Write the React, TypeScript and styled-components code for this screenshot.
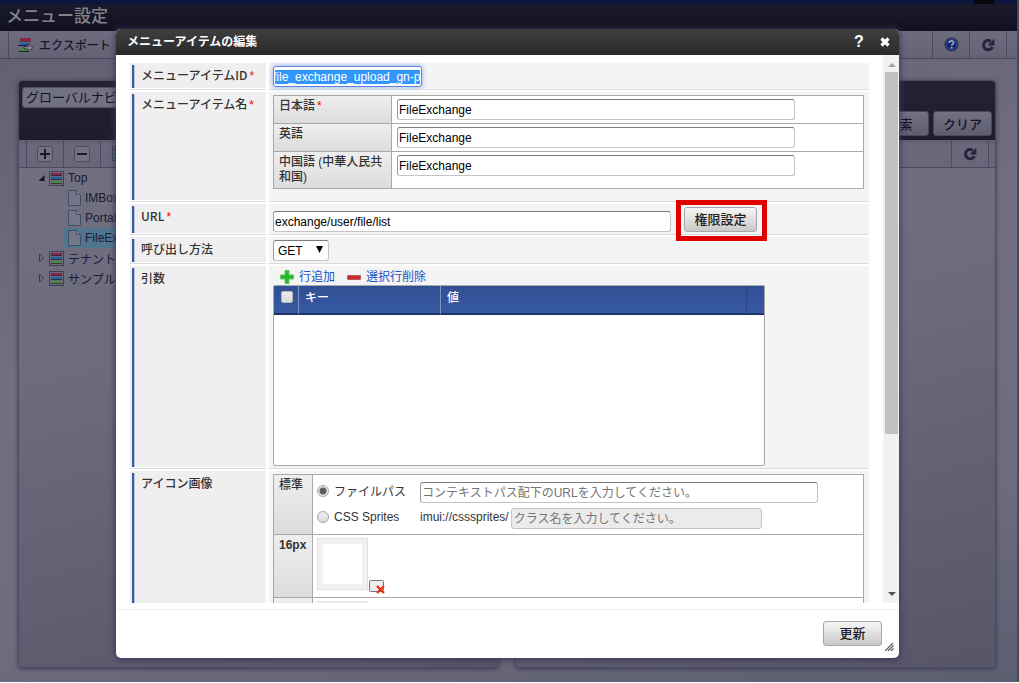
import React, { useEffect, useRef } from "react";
import styled, { createGlobalStyle, css } from "styled-components";

const GlobalStyle = createGlobalStyle`
  * { box-sizing: border-box; }
  html, body { margin: 0; padding: 0; background: #fff; }
  body, button, input, select {
    font-family: "Liberation Sans", "Noto Sans CJK JP", sans-serif;
    font-size: 12px;
    color: #333;
  }
  body { overflow: hidden; }
`;

/* ---------- Page behind the dialog ---------- */

const Page = styled.div`
  position: relative;
  display: flex;
  flex-direction: column;
  height: calc(100vh - 1px);
  border-right: 2px solid #4a4a4c;
  background: linear-gradient(170deg, #5f5e70 0%, #716f81 45%, #6e6d7f 75%, #5d5e70 100%);
`;

const TopStrip = styled.div`
  display: flex;
  justify-content: flex-end;
  height: 4px;
  padding-right: 22px;
  background: #0c163f;
`;

const TopBump = styled.span`
  width: 22px;
  height: 4px;
  border-radius: 0 0 11px 11px;
  background: #06070f;
`;

const PageTitle = styled.h1`
  margin: 0;
  height: 27px;
  padding-left: 6px;
  font-size: 17px;
  font-weight: 500;
  line-height: 25px;
  color: #83838c;
  background: linear-gradient(#1b1a2b, #121123);
`;

const PageToolbar = styled.div`
  display: flex;
  justify-content: space-between;
  height: 28px;
  padding: 0 10px 0 8px;
  border-bottom: 1px solid #47465a;
  background: linear-gradient(#6e6d80, #646376);
`;

const ToolGroup = styled.div`
  display: flex;
`;

const ToolButton = styled.button<{ $wide?: boolean }>`
  display: flex;
  align-items: center;
  justify-content: ${(p) => (p.$wide ? "flex-start" : "center")};
  gap: 5px;
  width: ${(p) => (p.$wide ? "120px" : "37px")};
  padding: 0 ${(p) => (p.$wide ? "9px" : "0")};
  border: 0;
  border-left: 1px solid #4b4a5e;
  background: none;
  color: #16152a;
  font-weight: 500;
  white-space: nowrap;
`;

const ToolEnd = styled.span`
  width: 1px;
  background: #4b4a5e;
`;

const Panels = styled.main`
  display: grid;
  grid-template-columns: 1fr 1fr;
  gap: 16px;
  flex: 1;
  min-height: 0;
  padding: 21px 21px 14px 18px;
`;

const Panel = styled.section`
  display: flex;
  flex-direction: column;
  overflow: hidden;
  border: 1px solid #4c4b5f;
  border-radius: 4px;
  background: linear-gradient(165deg, #737283 0%, #6c6b7d 45%, #575668 100%);
  box-shadow: 0 1px 4px #3c3b50;
`;

const PanelHead = styled.div`
  display: flex;
  flex-direction: column;
  justify-content: space-between;
  height: 59px;
  padding: 6px 3px 4px;
  background: linear-gradient(#232235, #1e1d2e);
`;

const NaviSelect = styled.select`
  appearance: none;
  width: 220px;
  height: 21px;
  padding: 0 3px;
  border: 1px solid #52515f;
  border-radius: 3px;
  background: #737283;
  font-size: 13px;
  color: #12112a;
`;

const HeadButtons = styled.div`
  display: flex;
  justify-content: flex-end;
  gap: 4px;
  margin-top: auto;
`;

const DimButton = styled.button`
  width: 59px;
  height: 25px;
  padding: 0;
  border: 1px solid #4a495a;
  border-radius: 3px;
  background: linear-gradient(#737283, #5e5d6f);
  font-size: 13px;
  font-weight: 500;
  color: #14132a;
`;

const PanelTools = styled.div<{ $end?: boolean }>`
  display: flex;
  flex: none;
  justify-content: ${(p) => (p.$end ? "flex-end" : "flex-start")};
  height: 28px;
  padding: 0 6px 0 7px;
  border-bottom: 1px solid #4b4a5e;
  background: linear-gradient(#5f5e70, #6a697b 20%, #686779);
`;

const Tree = styled.ul`
  margin: 0;
  padding: 0 0 0 19px;
  list-style: none;
  color: #1b1a2e;
`;

const TreeRow = styled.li<{ $leaf?: boolean; $active?: boolean }>`
  display: flex;
  align-items: center;
  gap: 4px;
  height: 20px;
  margin-left: ${(p) => (p.$leaf ? "26px" : "0")};
  padding-left: ${(p) => (p.$leaf ? "4px" : "0")};
  background: ${(p) => (p.$active ? "#4f7590" : "none")};
  white-space: nowrap;
`;

/* ---------- Dialog ---------- */

const Overlay = styled.div`
  position: absolute;
  inset: 0 2px 0 0;
  display: flex;
  justify-content: center;
  align-items: flex-start;
  padding-top: 29px;
`;

const Dialog = styled.div`
  display: flex;
  flex-direction: column;
  width: 100%;
  max-width: 783px;
  height: calc(100vh - 54px);
  overflow: hidden;
  border-radius: 5px;
  background: #fff;
  box-shadow: 0 1px 6px 1px #3a395a;
`;

const DialogHead = styled.header`
  display: flex;
  align-items: center;
  flex: none;
  height: 26px;
  padding: 0 7px 0 11px;
  background: linear-gradient(#3f3f3f, #2a2a2a);
  color: #fff;
`;

const DialogTitle = styled.h2`
  flex: 1;
  margin: 0;
  font-size: 12px;
  font-weight: 700;
  line-height: 24px;
`;

const HeadIcon = styled.button`
  display: flex;
  align-items: center;
  justify-content: center;
  width: 26px;
  height: 26px;
  padding: 0;
  border: 0;
  background: none;
  color: #fff;
  font-size: 16px;
  font-weight: 700;
  &:last-child { width: 14px; margin-left: 6px; }
`;

const DialogBody = styled.div`
  display: flex;
  flex: 1;
  min-height: 0;
`;

const Form = styled.form`
  flex: 1;
  min-width: 0;
  overflow: hidden;
  padding: 8px 14px 0 14px;
`;

const ScrollTrack = styled.div`
  display: flex;
  flex-direction: column;
  align-items: center;
  justify-content: space-between;
  width: 16px;
  padding: 8px 1px 7px 2px;
  background: #f1f1f1;
`;

const ScrollThumb = styled.div`
  width: 13px;
  height: 68%;
  margin: 5px 0 auto;
  background: #c1c1c1;
`;

const Row = styled.div`
  display: grid;
  grid-template-columns: 136px 1fr;
  column-gap: 3px;
  padding-bottom: 2px;
`;

const labelCell = css`
  padding: 4px 0 4px 11px;
  border-bottom: 1px solid #dcdcdc;
  background:
    linear-gradient(90deg, #3a5a9c 0 2px, #b5c0da 2px 3px) 2px 2px / 3px 100% no-repeat,
    #efefef;
  box-shadow: inset 0 -1px 0 #fff;
  font-family: "Noto Sans CJK JP", sans-serif;
  font-weight: 500;
  line-height: 16px;
`;

const RowLabel = styled.label`${labelCell}`;
const RowHeading = styled.div`${labelCell}`;

const Required = styled.span`
  margin-left: 2px;
  color: #f00;
  font-family: "Liberation Sans", sans-serif;
`;

const Value = styled.div`
  padding: 3px 5px 2px 4px;
  border-bottom: 1px solid #dcdcdc;
  background: #f4f4f4;
`;

const TextInput = styled.input<{ $w?: number }>`
  display: block;
  width: ${(p) => p.$w ?? 398}px;
  height: 21px;
  padding: 0 1px;
  border: 1px solid #c4c4c4;
  border-top-color: #7b7b7b;
  border-left-color: #9a9a9a;
  border-radius: 3px;
  outline: 0;
  background: #fff;
  color: #000;
  &::placeholder { color: #757575; opacity: 1; }
  &:disabled { padding-left: 2px; border-color: #c4c4c4; background: #ebebeb; }
`;

const IdInput = styled(TextInput)`
  border: 1px solid #5b86dc;
  box-shadow: 0 0 4px 1px #a9bdf0;
  &::selection { background: #3297fd; color: #fff; }
`;

const Method = styled.span`
  position: relative;
  display: block;
  width: 56px;
  height: 21px;
`;

const MethodSelect = styled.select`
  appearance: none;
  display: block;
  width: 100%;
  height: 100%;
  padding: 0 4px;
  border: 1px solid #c4c4c4;
  border-top-color: #7b7b7b;
  border-left-color: #9a9a9a;
  border-radius: 3px;
  background: #fff;
  color: #000;
`;

const MethodArrow = styled.svg`
  position: absolute;
  top: 6px;
  right: 6px;
  pointer-events: none;
`;

const SubTable = styled.table<{ $gap?: boolean }>`
  width: 100%;
  margin-bottom: ${(p) => (p.$gap ? "10px" : "0")};
  border: solid #a9a9a9;
  border-width: 1px 0 0 1px;
  border-spacing: 0;
  table-layout: fixed;
  background: #fff;
`;

const SubHead = styled.th<{ $w: number }>`
  width: ${(p) => p.$w}px;
  padding: 3px 5px 1px;
  border: solid #a9a9a9;
  border-width: 0 1px 1px 0;
  background: linear-gradient(#eeeeee, #dcdcdc);
  font-weight: 500;
  line-height: 15px;
  text-align: left;
  vertical-align: top;
`;

const SubCell = styled.td<{ $h: number; $tight?: boolean }>`
  height: ${(p) => p.$h}px;
  padding: 3px 4px 0 ${(p) => (p.$tight ? "4px" : "5px")};
  border: solid #a9a9a9;
  border-width: 0 1px 1px 0;
  vertical-align: top;
`;

const UrlLine = styled.div`
  display: flex;
  align-items: flex-end;
  gap: 13px;
`;

const PlainButton = styled.button<{ $w: number }>`
  display: block;
  width: ${(p) => p.$w}px;
  height: 25px;
  padding: 0;
  border: 1px solid #a8a8a8;
  border-radius: 3px;
  background: linear-gradient(#f6f6f6, #c9c9c9);
  font-size: 13px;
  font-weight: 500;
  line-height: 22px;
  color: #222;
`;

const Highlight = styled.span`
  position: relative;
  &::after {
    content: "";
    position: absolute;
    z-index: 1;
    inset: -7px -10px -9px -8px;
    border: 5px solid #e00000;
    pointer-events: none;
  }
`;

const ArgTools = styled.div`
  display: flex;
  gap: 12px;
  height: 16px;
  padding-left: 7px;
`;

const ArgTool = styled.button`
  display: flex;
  align-items: center;
  gap: 5px;
  padding: 0;
  border: 0;
  background: none;
  line-height: 16px;
  color: #1653c8;
`;

const ArgGrid = styled.div`
  width: 492px;
  height: 181px;
  border: 1px solid #a9a9a9;
  border-radius: 2px;
  background: #fff;
`;

const ArgTable = styled.table`
  width: 100%;
  border-spacing: 0;
  table-layout: fixed;
`;

const ArgHead = styled.th<{ $w?: number }>`
  width: ${(p) => (p.$w ? `${p.$w}px` : "auto")};
  height: 29px;
  padding: 4px 5px 0 6px;
  border-right: 1px solid #7d93c4;
  border-bottom: 2px solid #1f3468;
  background: linear-gradient(#305095, #3658a2);
  color: #fff;
  font-weight: 500;
  line-height: 16px;
  text-align: left;
  vertical-align: top;
  &:nth-child(3) { border-right-color: #28457f; }
  &:last-child { border-right: 0; }
`;

const Check = styled.input`
  appearance: none;
  display: block;
  width: 12px;
  height: 12px;
  margin: 1px 0 0 1px;
  border: 1px solid #b9b9b9;
  border-radius: 2px;
  background: linear-gradient(#ececec, #dcdcdc);
`;

const IconChoice = styled.div`
  display: grid;
  grid-template-columns: 103px 1fr;
  align-items: start;
  height: 26px;
  &:first-child { margin-top: 4px; }
`;

const RadioLabel = styled.label`
  display: flex;
  align-items: center;
  gap: 5px;
  height: 17px;
`;

const Radio = styled.input`
  appearance: none;
  width: 12px;
  height: 12px;
  margin: 0;
  border: 1px solid #a6a6a6;
  border-radius: 50%;
  background: linear-gradient(#ececec, #dcdcdc);
  &:checked {
    background: radial-gradient(circle, #5a5a5a 0 3px, #e4e4e4 4px);
  }
`;

const Sprite = styled.div`
  display: flex;
  align-items: flex-start;
  gap: 2px;
  line-height: 18px;
`;

const ThumbLine = styled.div`
  display: flex;
  align-items: flex-end;
  gap: 1px;
`;

const Thumb = styled.div`
  width: 51px;
  height: 52px;
  border: 1px solid #e2e2e2;
  background: #fff;
  box-shadow: inset 0 0 0 5px #f1f1f1;
`;

const ClearButton = styled.button`
  display: block;
  width: 16px;
  height: 15px;
  margin-bottom: -4px;
  padding: 0;
  border: 0;
  background: none;
`;

const DialogFoot = styled.footer`
  display: flex;
  flex: none;
  align-items: flex-end;
  justify-content: flex-end;
  gap: 3px;
  height: 49px;
  margin-top: 6px;
  padding: 0 5px 7px 0;
  border-top: 1px solid #ededed;
`;

const FootButton = styled(PlainButton)`
  margin-bottom: 5px;
`;

/* ---------- Icons ---------- */

const RefreshIcon = () => (
  <svg width="14" height="14" viewBox="0 0 14 14">
    <path d="M11.400 9.200A4.700 4.700 0 1 1 9.800 3.200" fill="none" stroke="#252438" strokeWidth="3" />
    <path d="M13.400.6v6.800H6.600z" fill="#252438" />
  </svg>
);

const HelpIcon = () => (
  <svg width="15" height="15" viewBox="0 0 15 15">
    <circle cx="7.5" cy="7.5" r="6.6" fill="#17276f" stroke="#3c3c4c" strokeWidth="1.2" />
    <circle cx="7.5" cy="7.5" r="5.2" fill="none" stroke="#3450a0" strokeWidth=".8" />
    <path d="M5.400 6c0-2.800 4.300-2.600 4.200-.2 0 1.300-2 1.300-2 2.800" fill="none" stroke="#a3a6bd" strokeWidth="1.700" />
    <rect x="6.700" y="9.800" width="1.800" height="1.800" fill="#a3a6bd" />
  </svg>
);

const MenuIcon = () => (
  <svg width="15" height="15" viewBox="0 0 15 15">
    <rect x=".5" y=".5" width="14" height="14" fill="#6b6a7b" stroke="#15142a" strokeDasharray="1 1" />
    <rect x="2" y="2" width="11" height="3" fill="#8f2142" />
    <rect x="2" y="6" width="11" height="3" fill="#1f6296" />
    <rect x="2" y="10" width="11" height="3" fill="#4a8a35" />
    <path d="M2 4.500h11M2 8.500h11M2 12.500h11" stroke="#2c2b44" strokeOpacity=".8" />
  </svg>
);

const ExportIcon = () => (
  <svg width="16" height="16" viewBox="0 0 16 16">
    <rect x="2" y="1" width="11" height="3" fill="#8f2142" />
    <path d="M1 4.500h12" stroke="#3a3950" />
    <rect x="2" y="6" width="10" height="2" fill="#1f6296" />
    <path d="M0 8.500h9" stroke="#1d1c30" />
    <rect x="2" y="11" width="9" height="3" fill="#4a8a35" />
    <path d="M1 14.500h10" stroke="#1d1c30" />
    <path d="M6 9.500h4V6.800l5 4-5 4V12H6z" fill="#85849a" stroke="#2b2a40" strokeWidth=".8" />
  </svg>
);

const FileIcon = () => (
  <svg width="13" height="16" viewBox="0 0 13 16">
    <path d="M1 .5h7.500l4 4v11H.5V.5z" fill="#72788a" stroke="#454e5e" />
    <path d="M8.500.5v4h4" fill="#858b9b" stroke="#454e5e" />
  </svg>
);

const SignIcon = ({ plus }: { plus?: boolean }) => (
  <svg width="16" height="16" viewBox="0 0 16 16">
    <rect x=".5" y=".5" width="15" height="15" rx="2" fill="#737283" stroke="#4b4a5c" />
    <path d={plus ? "M3 8h10M8 3v10" : "M3 8h10"} stroke="#1b1a2e" strokeWidth="2" />
  </svg>
);

const Twisty = ({ open }: { open?: boolean }) => (
  <svg width="7" height="10" viewBox="0 0 7 10">
    {open ? <path d="M6.500 2v6H.5z" fill="#151426" /> : <path d="M1.500 1v8l4-4z" fill="none" stroke="#3a394c" />}
  </svg>
);

const leaves = ["IMBox", "Portal", "FileExchange"];
const names = [
  { id: "ja", label: "日本語", required: true, h: 28 },
  { id: "en", label: "英語", required: false, h: 28 },
  { id: "zh", label: "中国語 (中華人民共和国)", required: false, h: 37 },
];

export default function App() {
  const idRef = useRef<HTMLInputElement>(null);

  useEffect(() => {
    idRef.current?.focus();
    idRef.current?.select();
  }, []);

  return (
    <>
      <GlobalStyle />
      <Page>
        <TopStrip><TopBump /></TopStrip>
        <PageTitle>メニュー設定</PageTitle>
        <PageToolbar>
          <ToolGroup>
            <ToolButton $wide><ExportIcon />エクスポート</ToolButton>
          </ToolGroup>
          <ToolGroup>
            <ToolButton aria-label="ヘルプ"><HelpIcon /></ToolButton>
            <ToolButton aria-label="再読み込み"><RefreshIcon /></ToolButton>
            <ToolEnd />
          </ToolGroup>
        </PageToolbar>
        <Panels>
          <Panel>
            <PanelHead>
              <NaviSelect aria-label="メニューグループ">
                <option>グローバルナビ</option>
              </NaviSelect>
            </PanelHead>
            <PanelTools>
              <ToolButton aria-label="展開"><SignIcon plus /></ToolButton>
              <ToolButton aria-label="折りたたみ"><SignIcon /></ToolButton>
              <ToolButton aria-label="メニュー"><MenuIcon /></ToolButton>
            </PanelTools>
            <Tree>
              <TreeRow><Twisty open /><MenuIcon />Top</TreeRow>
              {leaves.map((name, i) => (
                <TreeRow key={name} $leaf $active={i === 2}><FileIcon />{name}</TreeRow>
              ))}
              <TreeRow><Twisty /><MenuIcon />テナント</TreeRow>
              <TreeRow><Twisty /><MenuIcon />サンプル</TreeRow>
            </Tree>
          </Panel>
          <Panel>
            <PanelHead>
              <HeadButtons>
                <DimButton>検索</DimButton>
                <DimButton>クリア</DimButton>
              </HeadButtons>
            </PanelHead>
            <PanelTools $end>
              <ToolButton aria-label="更新"><RefreshIcon /></ToolButton>
              <ToolEnd />
            </PanelTools>
          </Panel>
        </Panels>

        <Overlay>
          <Dialog role="dialog" aria-labelledby="dialog-title">
            <DialogHead>
              <DialogTitle id="dialog-title">メニューアイテムの編集</DialogTitle>
              <HeadIcon>?</HeadIcon>
              <HeadIcon aria-label="閉じる">
                <svg width="10" height="10" viewBox="0 0 10 10">
                  <path d="M1.500 1.500l7 7M8.500 1.500l-7 7" stroke="#fff" strokeWidth="3.200" />
                </svg>
              </HeadIcon>
            </DialogHead>

            <DialogBody>
              <Form>
                <Row>
                  <RowLabel htmlFor="item-id">メニューアイテムID<Required>*</Required></RowLabel>
                  <Value>
                    <IdInput id="item-id" ref={idRef} $w={149} defaultValue="file_exchange_upload_gn-p" />
                  </Value>
                </Row>
                <Row>
                  <RowHeading>メニューアイテム名<Required>*</Required></RowHeading>
                  <Value>
                    <SubTable $gap>
                      <tbody>
                        {names.map((n) => (
                          <tr key={n.id}>
                            <SubHead $w={118}>
                              <label htmlFor={`name-${n.id}`}>{n.label}</label>
                              {n.required && <Required>*</Required>}
                            </SubHead>
                            <SubCell $h={n.h}>
                              <TextInput id={`name-${n.id}`} defaultValue="FileExchange" />
                            </SubCell>
                          </tr>
                        ))}
                      </tbody>
                    </SubTable>
                  </Value>
                </Row>
                <Row>
                  <RowLabel htmlFor="item-url">URL<Required>*</Required></RowLabel>
                  <Value>
                    <UrlLine>
                      <TextInput id="item-url" defaultValue="exchange/user/file/list" />
                      <Highlight><PlainButton type="button" $w={73}>権限設定</PlainButton></Highlight>
                    </UrlLine>
                  </Value>
                </Row>
                <Row>
                  <RowLabel htmlFor="item-method">呼び出し方法</RowLabel>
                  <Value>
                    <Method>
                      <MethodSelect id="item-method"><option>GET</option></MethodSelect>
                      <MethodArrow width="7" height="7" viewBox="0 0 7 7"><path d="M0 0h7L3.500 7z" fill="#000" /></MethodArrow>
                    </Method>
                  </Value>
                </Row>
                <Row>
                  <RowHeading>引数</RowHeading>
                  <Value>
                    <ArgTools>
                      <ArgTool type="button">
                        <svg width="14" height="14" viewBox="0 0 14 14">
                          <path d="M5 .5h4V5h4.500v4H9v4.500H5V9H.5V5H5z" fill="#2bb52f" stroke="#5fca5f" />
                        </svg>
                        行追加
                      </ArgTool>
                      <ArgTool type="button">
                        <svg width="14" height="14" viewBox="0 0 14 14">
                          <rect x=".5" y="5.500" width="13" height="4" rx=".5" fill="#c92c2c" stroke="#b5595c" />
                        </svg>
                        選択行削除
                      </ArgTool>
                    </ArgTools>
                    <ArgGrid>
                      <ArgTable>
                        <thead>
                          <tr>
                            <ArgHead $w={25}><Check type="checkbox" aria-label="すべて選択" /></ArgHead>
                            <ArgHead $w={142}>キー</ArgHead>
                            <ArgHead>値</ArgHead>
                            <ArgHead $w={17} />
                          </tr>
                        </thead>
                      </ArgTable>
                    </ArgGrid>
                  </Value>
                </Row>
                <Row>
                  <RowHeading>アイコン画像</RowHeading>
                  <Value>
                    <SubTable>
                      <tbody>
                        <tr>
                          <SubHead $w={39}>標準</SubHead>
                          <SubCell $h={60} $tight>
                            <IconChoice>
                              <RadioLabel><Radio type="radio" name="icon" defaultChecked />ファイルパス</RadioLabel>
                              <TextInput aria-label="ファイルパス" placeholder="コンテキストパス配下のURLを入力してください。" />
                            </IconChoice>
                            <IconChoice>
                              <RadioLabel><Radio type="radio" name="icon" />CSS Sprites</RadioLabel>
                              <Sprite>
                                <label htmlFor="sprite">imui://csssprites/</label>
                                <TextInput id="sprite" $w={251} disabled placeholder="クラス名を入力してください。" />
                              </Sprite>
                            </IconChoice>
                          </SubCell>
                        </tr>
                        <tr>
                          <SubHead $w={39}><b>16px</b></SubHead>
                          <SubCell $h={63} $tight>
                            <ThumbLine>
                              <Thumb />
                              <ClearButton type="button" aria-label="16px 削除">
                                <svg width="16" height="15" viewBox="0 0 16 15">
                                  <rect x=".5" y="1.500" width="14" height="11" rx="1" fill="#eee" stroke="#777" />
                                  <path d="M8 7l7 7M15 7l-7 7" stroke="#ee2a10" strokeWidth="2.200" />
                                </svg>
                              </ClearButton>
                            </ThumbLine>
                          </SubCell>
                        </tr>
                        <tr>
                          <SubHead $w={39} />
                          <SubCell $h={63} $tight><Thumb /></SubCell>
                        </tr>
                      </tbody>
                    </SubTable>
                  </Value>
                </Row>
              </Form>
              <ScrollTrack>
                <svg width="8" height="4" viewBox="0 0 8 4"><path d="M4 0l4 4H0z" fill="#a3a3a3" /></svg>
                <ScrollThumb />
                <svg width="8" height="4" viewBox="0 0 8 4"><path d="M0 0h8L4 4z" fill="#505050" /></svg>
              </ScrollTrack>
            </DialogBody>

            <DialogFoot>
              <FootButton type="button" $w={59}>更新</FootButton>
              <svg width="9" height="8" viewBox="0 0 9 8">
                <path d="M0 8l8-8M3 8l5.500-5.500M6 8l2.500-2.500" stroke="#555" strokeWidth="1.200" />
              </svg>
            </DialogFoot>
          </Dialog>
        </Overlay>
      </Page>
    </>
  );
}
